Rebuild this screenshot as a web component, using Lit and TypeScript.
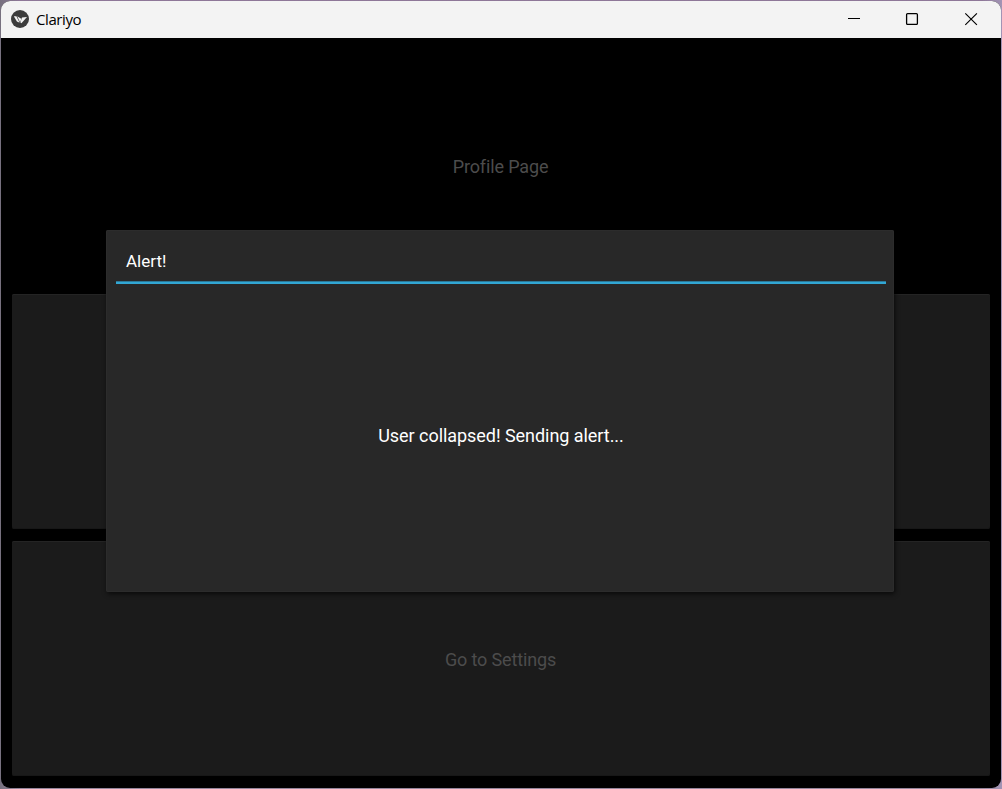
import { LitElement, html, css } from "lit";
import { customElement } from "lit/decorators.js";

@customElement("title-bar")
class TitleBar extends LitElement {
  static styles = css`
    :host { display: flex; align-items: center; height: 37px; background: #f3f3f3; color: #000; }
    .logo { margin: 0 0 1px 10px; display: block; }
    .name { margin-left: 7px; font: 15px/20px "Open Sans", "Noto Sans", sans-serif; letter-spacing: -0.42px; flex: 1; padding-bottom: 1px; }
    .controls { display: flex; margin-right: 1px; }
    .control { width: 58.5px; height: 37px; display: block; }
  `;
  render() {
    return html`
      <svg class="logo" width="18" height="18" viewBox="0 0 18 18">
        <circle cx="9" cy="9" r="9" fill="#3c3c3c" />
        <path d="M2.8 6.2 5.4 6.2 8.6 12.8 5.9 11.4Z" fill="#f4f4f4" />
        <path d="M6.2 6.2 9.4 8.2 10.2 9.6 9 12.2Z" fill="#f4f4f4" />
        <path d="M11 7.4 16 7 10.4 13.2 9.4 12.6Z" fill="#f4f4f4" />
      </svg>
      <span class="name">Clariyo</span>
      <div class="controls">
        <svg class="control" viewBox="0 0 58.5 37"><path d="M23 17.5h12" stroke="#000" fill="none" stroke-width="1.1" /></svg>
        <svg class="control" viewBox="0 0 58.5 37"><rect x="23.6" y="12.6" width="10.8" height="10.8" rx="1" stroke="#000" fill="none" stroke-width="1.3" /></svg>
        <svg class="control" viewBox="0 0 58.5 37"><path d="M23.3 12.3l11.6 11.6M34.9 12.3l-11.6 11.6" stroke="#000" fill="none" stroke-width="1.15" /></svg>
      </div>
    `;
  }
}

@customElement("alert-popup")
class AlertPopup extends LitElement {
  static styles = css`
    :host {
      display: flex; flex-direction: column; box-sizing: border-box;
      width: 788px; height: 362px; padding: 10px 8px 10px 10px;
      background: #282828; border-radius: 2px; color: #fff;
      box-shadow: inset 0 0 0 1px #2c2c2c, 1px 2px 5px rgba(0, 0, 0, 0.65);
      font-family: Roboto, sans-serif;
    }
    .title { height: 41px; line-height: 42px; padding-left: 10px; font-size: 17px; }
    .rule { height: 3px; background: linear-gradient(#2b7898 0 1px, #32a7d4 1px 3px); }
    .message { flex: 1; display: flex; align-items: center; justify-content: center; font-size: 18px; letter-spacing: -0.05px; padding-top: 4px; }
  `;
  render() {
    return html`
      <div class="title">Alert!</div>
      <div class="rule"></div>
      <div class="message">User collapsed! Sending alert...</div>
    `;
  }
}

@customElement("app-root")
class AppRoot extends LitElement {
  static styles = css`
    :host {
      display: block; box-sizing: border-box; width: 1002px; height: 789px; padding: 1px;
      background: linear-gradient(90deg, #77717f, transparent 2%, transparent 98%, #a294b5),
        linear-gradient(#8e7798, #5d5362 50%, #95869c);
    }
    .window { position: relative; display: flex; flex-direction: column; height: 787px; border-radius: 9px; overflow: hidden; background: #000; }
    .page { flex: 1; display: grid; grid-template-rows: repeat(3, 235px); gap: 12px; padding: 9px 11px 12px; font: 18px/22px Roboto, sans-serif; letter-spacing: -0.14px; color: #4c4c4c; }
    .cell { display: flex; align-items: center; justify-content: center; padding: 4px 1px 0 0; }
    .button { padding-top: 3px; background: #1b1b1b; border-radius: 2px; box-shadow: inset 0 1px #242424, inset 0 -1px #171717; }
    .popup { position: absolute; left: 105px; top: 229px; }
  `;
  render() {
    return html`
      <div class="window">
        <title-bar></title-bar>
        <div class="page">
          <div class="cell">Profile Page</div>
          <div class="cell button"></div>
          <div class="cell button">Go to Settings</div>
        </div>
        <alert-popup class="popup"></alert-popup>
      </div>
    `;
  }
}
